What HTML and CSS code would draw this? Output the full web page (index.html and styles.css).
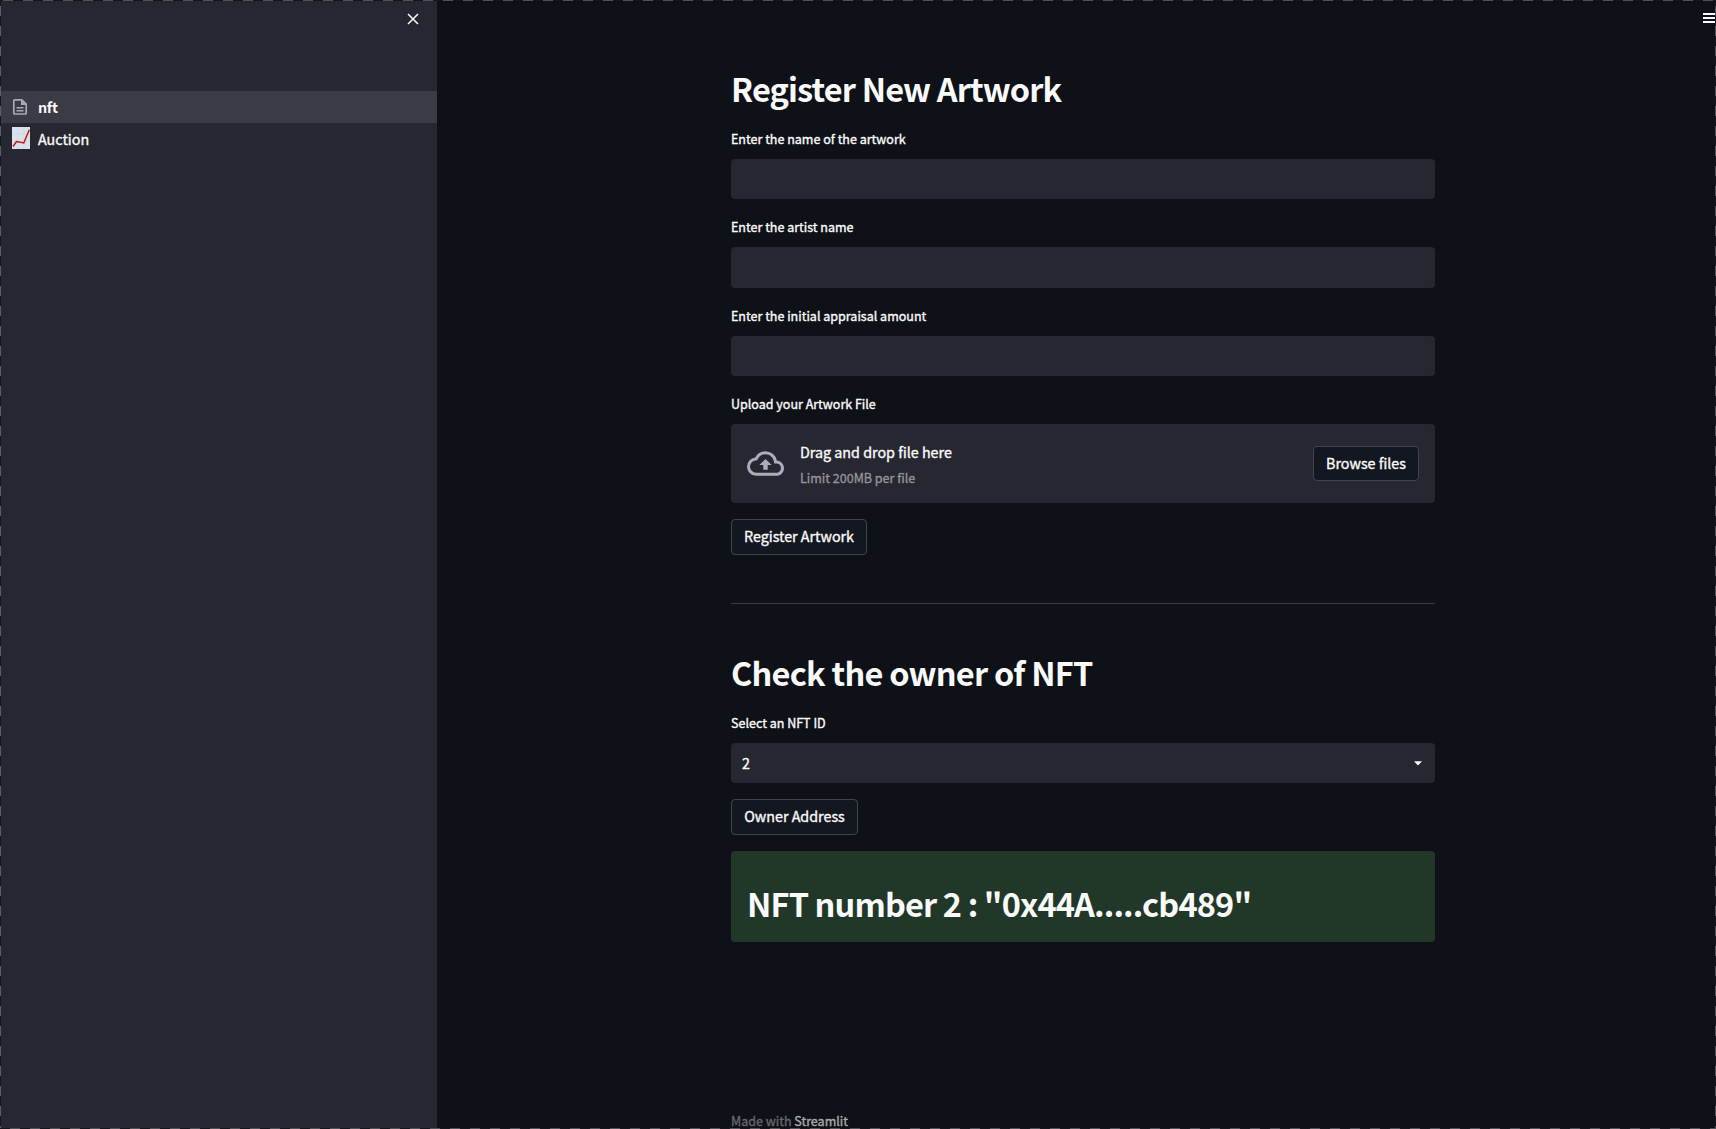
FILE: index.html
```html
<!DOCTYPE html>
<html lang="en">
<head>
<meta charset="utf-8">
<title>nft</title>
<link rel="stylesheet" href="styles.css">
</head>
<body>
<div class="app">
  <aside class="sidebar">
    <div class="sidebar-top">
      <button class="icon-button" aria-label="Close"><svg width="12" height="12" viewBox="0 0 12 12"><path d="M1 1l10 10M11 1L1 11" stroke="#fafafa" stroke-width="1.5" fill="none"/></svg></button>
    </div>
    <nav class="nav">
      <a class="nav-item active">
        <svg width="20" height="20" viewBox="0 0 20 20"><path d="M4.800 2.800h7l4.400 4.400v8.800a1 1 0 0 1-1 1H4.800a1 1 0 0 1-1-1V3.800a1 1 0 0 1 1-1z" fill="none" stroke="#a9a9ba" stroke-width="1.700"/><path d="M11 2.500v5.500h5.500zM6.500 10h7v1.400h-7zM6.500 13h7v1.400h-7z" fill="#a9a9ba"/></svg>
        <span>nft</span>
      </a>
      <a class="nav-item">
        <svg class="chart-icon" width="20" height="22" viewBox="0 0 20 22"><path d="M2 0h18v22H2z" fill="#d9e2e8"/><path d="M8 0v22M14 0v22M2 7h18M2 14h18" stroke="#cbd5dc" stroke-width=".7"/><path d="M3 19.500l3.500-5 7.300 1.500L19.300 2.800" stroke="#c9141c" stroke-width="1.500" fill="none"/></svg>
        <span>Auction</span>
      </a>
    </nav>
  </aside>
  <main class="main">
    <div class="content">
      <h2 class="title">Register New Artwork</h2>
      <label class="field first"><span class="label">Enter the name of the artwork</span><span class="input"></span></label>
      <label class="field"><span class="label">Enter the artist name</span><span class="input tall"></span></label>
      <label class="field"><span class="label">Enter the initial appraisal amount</span><span class="input"></span></label>
      <div class="field">
        <span class="label">Upload your Artwork File</span>
        <div class="dropzone">
          <svg width="37" height="37" viewBox="0 0 24 24" fill="#a9adbd"><path d="M19.350 10.040A7.490 7.490 0 0 0 12 4C9.110 4 6.600 5.640 5.350 8.040A5.994 5.994 0 0 0 0 14c0 3.310 2.690 6 6 6h13c2.760 0 5-2.240 5-5 0-2.640-2.050-4.780-4.650-4.960zM19 18H6c-2.210 0-4-1.790-4-4 0-2.050 1.530-3.760 3.560-3.970l1.070-.110.5-.950A5.469 5.469 0 0 1 12 6c2.620 0 4.880 1.860 5.390 4.430l.3 1.500 1.530.110A2.980 2.980 0 0 1 22 15c0 1.650-1.350 3-3 3zM8 13h2.550v3h2.900v-3H16l-4-4z"/></svg>
          <div class="drop-text"><span class="drop-title">Drag and drop file here</span><small class="drop-limit">Limit 200MB per file</small></div>
          <button class="button browse">Browse files</button>
        </div>
      </div>
      <button class="button register">Register Artwork</button>
      <hr class="rule">
      <h2 class="title owner-title">Check the owner of NFT</h2>
      <div class="field">
        <span class="label">Select an NFT ID</span>
        <div class="select"><span class="value">2</span><svg width="8" height="5" viewBox="0 0 8 5"><path d="M0 .3h8L4 4.500z" fill="#fafafa"/></svg></div>
      </div>
      <button class="button owner">Owner Address</button>
      <div class="success"><span class="success-text">NFT number 2 : "0x44A.....cb489"</span></div>
      <footer class="footer">Made with <a>Streamlit</a></footer>
    </div>
    <button class="menu" aria-label="Menu"><svg width="13" height="10" viewBox="0 0 13 10" fill="#fafafa"><path d="M0 0h13v2H0zM0 4h13v2H0zM0 8h13v2H0z"/></svg></button>
  </main>
  <div class="frame"></div>
</div>
</body>
</html>
```
FILE: styles.css
```css
* { box-sizing: border-box; }
body {
  margin: 0;
  background: #0e1117;
  color: #fafafa;
  font-family: "Noto Sans CJK SC", "Noto Sans", sans-serif;
  font-size: 14.3px;
  font-weight: 400;
  -webkit-text-stroke: 0.35px currentColor;
}
button { font: inherit; color: inherit; padding: 0; border: 0; background: none; -webkit-text-stroke: inherit; }
svg { display: block; flex: none; }
.app { position: relative; display: flex; width: 1716px; height: 1129px; overflow: hidden; }
.sidebar { width: 437px; background: #262730; flex: none; }
.sidebar-top { height: 91px; padding: 13px 18px 0 0; display: flex; justify-content: flex-end; align-items: flex-start; }
.nav-item { display: flex; align-items: center; height: 32px; padding-left: 10px; gap: 8px; line-height: 32px; }
.nav-item.active { background: #3b3b46; font-weight: 700; letter-spacing: -0.3px; -webkit-text-stroke: 0; }
.chart-icon { margin-bottom: 2px; }
.main { position: relative; flex: 1; }
.content { width: 704px; margin-left: 294px; padding-top: 64px; display: flex; flex-direction: column; align-items: flex-start; white-space: nowrap; }
.title { margin: 0; height: 48px; line-height: 48px; font-size: 32.5px; font-weight: 700; letter-spacing: -0.86px; -webkit-text-stroke: 0; }
.field { width: 100%; display: flex; flex-direction: column; margin-bottom: 16px; }
.first { margin-top: 15px; }
.label { height: 32px; line-height: 24px; font-size: 12.53px; }
.input { height: 40px; background: #262730; border-radius: 4px; }
.input.tall { height: 41px; }
.dropzone { height: 79px; background: #262730; border-radius: 4px; padding: 0 16px 1px; display: flex; align-items: center; }
.drop-text { display: flex; flex-direction: column; margin: 4px 0 0 16px; flex: 1; }
.drop-title { line-height: 26px; }
.drop-limit { font-size: 12.53px; line-height: 26px; color: #939499; }
.button { height: 36px; line-height: 32px; padding-bottom: 2px; border: 1px solid #41444c; border-radius: 4px; background: #131720; text-align: center; }
.browse { width: 106px; height: 35px; }
.register { width: 136px; }
.owner { width: 127px; }
.rule { width: 100%; height: 1px; border: 0; margin: 48px 0 44px; background: #3b3d44; }
.owner-title { margin-bottom: 15px; letter-spacing: -0.77px; }
.select { height: 40px; background: #262730; border-radius: 4px; padding: 0 13px 0 11px; display: flex; align-items: center; justify-content: space-between; }
.value { padding-bottom: 2px; }
.success { width: 100%; height: 91px; margin-top: 16px; padding: 28px 16px 0; background: #213829; border-radius: 4px; }
.success-text { display: block; line-height: 48px; font-size: 32.5px; font-weight: 700; letter-spacing: -0.86px; -webkit-text-stroke: 0; }
.footer { margin-top: 167px; line-height: 24px; font-size: 12.53px; color: #66686d; white-space: pre; }
.footer a { color: #a9aaac; }
.menu { position: absolute; top: 13px; right: 0; }
.frame {
  position: absolute; inset: 0; pointer-events: none;
  background:
    repeating-linear-gradient(90deg, #14161d 0 7px, #505258 7px 17px, #14161d 17px 20px) -4px 0 / 1740px 1px no-repeat,
    repeating-linear-gradient(90deg, #14161d 0 10px, #505258 10px 20px) 0 100% / 1716px 1px no-repeat,
    repeating-linear-gradient(180deg, #14161d 0 6px, #5c5e66 6px 16px, #14161d 16px 20px) 0 0 / 1px 1129px no-repeat,
    repeating-linear-gradient(180deg, #14161d 0 6px, #505258 6px 16px, #14161d 16px 20px) 100% 0 / 1px 1129px no-repeat;
}
```
